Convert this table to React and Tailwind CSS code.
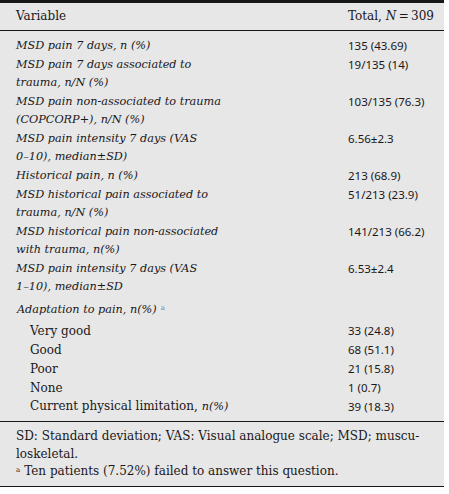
const rows = [
  { label: ["MSD pain 7 days, n (%)"], value: "135 (43.69)" },
  { label: ["MSD pain 7 days associated to", "trauma, n/N (%)"], value: "19/135 (14)" },
  { label: ["MSD pain non-associated to trauma", "(COPCORP+), n/N (%)"], value: "103/135 (76.3)" },
  { label: ["MSD pain intensity 7 days (VAS", "0–10), median±SD)"], value: "6.56±2.3" },
  { label: ["Historical pain, n (%)"], value: "213 (68.9)" },
  { label: ["MSD historical pain associated to", "trauma, n/N (%)"], value: "51/213 (23.9)" },
  { label: ["MSD historical pain non-associated", "with trauma, n(%)"], value: "141/213 (66.2)" },
  { label: ["MSD pain intensity 7 days (VAS", "1–10), median±SD"], value: "6.53±2.4" },
];

const adaptation = [
  { label: "Very good", value: "33 (24.8)" },
  { label: "Good", value: "68 (51.1)" },
  { label: "Poor", value: "21 (15.8)" },
  { label: "None", value: "1 (0.7)" },
  { label: "Current physical limitation, ", italic: "n(%)", value: "39 (18.3)" },
];

const serif = "font-['DejaVu_Serif',serif]";
const sans = "font-['Noto_Sans',sans-serif]";

export default function App() {
  return (
    <div className="h-[494px] w-[449px] bg-white text-[#1a1718]">
      <div className="w-[444px] bg-[#e7e7e8]">
        <div className="h-[3px] bg-[#1a1718]" />
        <div className={`flex h-[28px] items-end border-b border-[#1a1718] pb-[5px] text-[12px] ${serif}`}>
          <div className="w-[348px] pl-4">Variable</div>
          <div>
            Total, <span className="italic">N</span>&thinsp;=&thinsp;309
          </div>
        </div>

        <div className="pt-[5px]">
          {rows.map((row, i) => (
            <div key={i} className="flex py-[0.5px] leading-[18px]">
              <div className={`w-[348px] pl-4 text-[11.25px] italic ${serif}`}>
                {row.label.map((line, j) => (
                  <div key={j} className="whitespace-nowrap">
                    {line}
                  </div>
                ))}
              </div>
              <div className={`text-[11.5px] ${sans}`}>{row.value}</div>
            </div>
          ))}

          <div className={`mt-[5px] pl-[17px] text-[11.25px] italic leading-[18px] ${serif}`}>
            Adaptation to pain, n(%)
            <sup className="ml-1 text-[7px] not-italic text-[#5b7bb5]">a</sup>
          </div>
          <div className="pt-[2px] pb-[5px]">
            {adaptation.map((row) => (
              <div key={row.label} className="flex h-[19px] items-center">
                <div className={`w-[348px] pl-[30px] text-[12px] ${serif}`}>
                  {row.label}
                  {row.italic && <span className="text-[11.25px] italic">{row.italic}</span>}
                </div>
                <div className={`text-[11.5px] ${sans}`}>{row.value}</div>
              </div>
            ))}
          </div>
        </div>

        <div className={`border-y-[1.5px] border-[#1a1718] px-4 pt-[6px] pb-[5px] text-[12px] leading-[17.5px] ${serif}`}>
          <div className="whitespace-nowrap">SD: Standard deviation; VAS: Visual analogue scale; MSD; muscu-</div>
          <div>loskeletal.</div>
          <div>
            <sup className="mr-1 text-[7px]">a</sup>Ten patients (7.52%) failed to answer this question.
          </div>
        </div>
      </div>
    </div>
  );
}
